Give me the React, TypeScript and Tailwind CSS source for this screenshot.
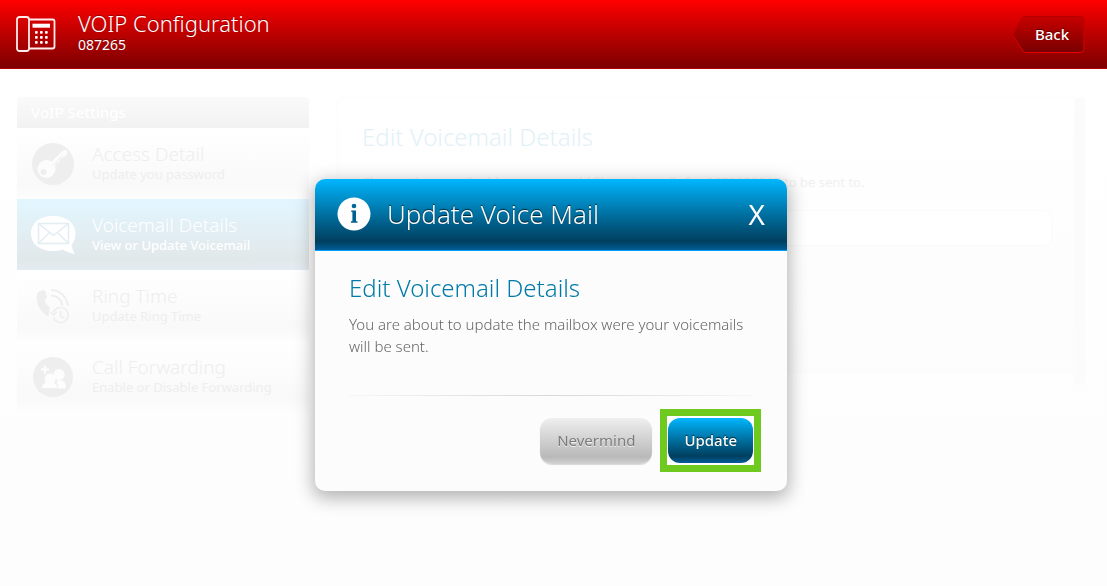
import { useState } from 'react';

type IconProps = { className?: string };

function PhoneIcon({ className }: IconProps) {
  return (
    <svg viewBox="0 0 40 36" className={className} fill="none" stroke="#ffecec" strokeWidth="1.8" aria-hidden="true">
      <rect x="1" y="1" width="12" height="34" rx="2.5" />
      <path d="M13 3.5h23.5a2 2 0 0 1 2 2v25a2 2 0 0 1-2 2H13" />
      <rect x="16.5" y="7.7" width="17.5" height="4" fill="#fff" stroke="none" />
      <g fill="#fff" stroke="none">
        {[15, 20, 25].map((y) =>
          [19, 24, 29].map((x) => <rect key={`${x}-${y}`} x={x} y={y} width="2.7" height="2.7" rx="0.8" />)
        )}
      </g>
    </svg>
  );
}

function KeyIcon({ className }: IconProps) {
  return (
    <svg viewBox="0 0 42 42" className={className} aria-hidden="true">
      <circle cx="21" cy="21" r="21" fill="#eeeeee" />
      <circle cx="14.5" cy="26" r="9" fill="#fcfcfc" />
      <circle cx="11.5" cy="29" r="3" fill="#eeeeee" />
      <path d="M18 20 31 7.500q4-2 4.500 1.500 0 2-2 4L30 15l-2 1-1 3-3 1-1 3-2 2z" fill="#fcfcfc" />
      <path d="M20.500 22.500 31 12" stroke="#eeeeee" strokeWidth="1" />
    </svg>
  );
}

function MailIcon({ className }: IconProps) {
  return (
    <svg viewBox="0 0 46 40" className={className} aria-hidden="true">
      <path
        d="M23 1C10 1 1 8 1 18.500S10 36 23 36c4 0 7-.6 10-1.500 3 2 7 3.500 12 4.500-2-3-3-6-3.500-9 2.500-3 4-7 4-11.500C45.500 8 36 1 23 1z"
        fill="#fff"
      />
      <g fill="none" stroke="#e3eef3" strokeWidth="1.600">
        <rect x="8.500" y="8.500" width="30" height="20" />
        <path d="m8.500 8.500 15 12 15-12M8.500 28.500l11-11M38.500 28.500l-11-11" />
      </g>
    </svg>
  );
}

function RingIcon({ className }: IconProps) {
  return (
    <svg viewBox="0 0 36 36" className={className} fill="none" aria-hidden="true">
      <path
        d="M3.500 4 8 2q2 0 2.500 2l1.500 5q0 1.500-2.500 3c1 3 2.500 5 5 7.500l-1 9C6 25 0 15 2 7q.5-2 1.500-3z"
        fill="#eeeeee"
      />
      <path d="M16 2c9 0 16 7 17 16M16 7.500c6 0 10 4 11.500 10" stroke="#eeeeee" strokeWidth="2" />
      <path d="M18.500 24.500a7.500 7.500 0 1 1 0 5M16 24l2.500 3 3-3M25.500 23v5l4 2.500" stroke="#eeeeee" strokeWidth="1.600" />
    </svg>
  );
}

function PeopleIcon({ className }: IconProps) {
  return (
    <svg viewBox="0 0 40 40" className={className} aria-hidden="true">
      <circle cx="20" cy="20" r="20" fill="#eeeeee" />
      <path d="M12 8.500v8M8 12.500h8" stroke="#fdfdfd" strokeWidth="2.200" />
      <circle cx="26" cy="17.500" r="5.500" fill="#fdfdfd" />
      <path d="M24 31.500v-8q8-1 8.500 4v4z" fill="#fdfdfd" />
      <g fill="#fdfdfd" stroke="#eeeeee" strokeWidth="1">
        <path d="M8.500 31.500c0-4 2-5.500 5-6h7c2.500.5 4.500 2 4.500 6z" />
        <circle cx="17" cy="22" r="5.500" stroke="none" />
      </g>
    </svg>
  );
}

function InfoIcon({ className }: IconProps) {
  return (
    <svg viewBox="0 0 34 34" className={className} aria-hidden="true">
      <circle cx="17" cy="17" r="16.500" fill="#fff" />
      <circle cx="17" cy="9" r="2.300" fill="#00699b" />
      <path d="M14.300 13.500h4.700v10.800h1.500v1.500h-6.600v-1.500h1.500v-9.300h-1.100z" fill="#00608f" />
    </svg>
  );
}

const menuItems = [
  { title: 'Access Detail', subtitle: 'Update you password', Icon: KeyIcon, iconClass: 'size-[42px]' },
  { title: 'Voicemail Details', subtitle: 'View or Update Voicemail', Icon: MailIcon, iconClass: 'h-10 w-[46px]' },
  { title: 'Ring Time', subtitle: 'Update Ring Time', Icon: RingIcon, iconClass: 'size-9' },
  { title: 'Call Forwarding', subtitle: 'Enable or Disable Forwarding', Icon: PeopleIcon, iconClass: 'size-10' },
];

function Header() {
  return (
    <header className="flex items-center border-b border-[#b80000] bg-linear-to-b from-[#ff0000] to-[#7d0000] pr-[22px] pl-4 text-white">
      <PhoneIcon className="h-9 w-10 shrink-0" />
      <div className="flex-1 pt-2 pb-4 pl-[22px] [text-shadow:0_-1px_0_rgba(0,0,0,0.35)]">
        <h1 className="text-[22px] leading-[30px] font-light">VOIP Configuration</h1>
        <p className="text-sm leading-[14px]">087265</p>
      </div>
      <button type="button" className="relative h-[37px] w-[70px] pl-1 text-[15px] font-medium">
        <svg viewBox="0 0 74 37" className="absolute inset-y-0 right-0 h-[37px] w-[74px]" aria-hidden="true">
          <defs>
            <linearGradient id="back" x1="0" y1="0" x2="0" y2="1">
              <stop offset="0" stopColor="#c80000" />
              <stop offset="1" stopColor="#780000" />
            </linearGradient>
            <linearGradient id="backEdge" x1="0" y1="0" x2="0" y2="1">
              <stop offset="0" stopColor="#b40000" />
              <stop offset="1" stopColor="#e60000" />
            </linearGradient>
          </defs>
          <path
            d="M13 .5h56a4 4 0 0 1 4 4v28a4 4 0 0 1-4 4H15q-2 0-3-1.500L1.500 18.500 11 2q.8-1.500 2-1.500z"
            fill="url(#back)"
            stroke="url(#backEdge)"
          />
        </svg>
        <span className="relative [text-shadow:0_-1px_0_rgba(0,0,0,0.5)]">Back</span>
      </button>
    </header>
  );
}

function Sidebar() {
  return (
    <nav className="w-[292px] shrink-0">
      <h2 className="rounded-t bg-linear-to-b from-[#fafafa] to-[#f2f2f2] pl-3.5 text-[15px] leading-[31px] font-medium text-white">
        VoIP Settings
      </h2>
      {menuItems.map(({ title, subtitle, Icon, iconClass }) => {
        const active = title === 'Voicemail Details';
        return (
          <a
            key={title}
            href="#"
            className={
              active
                ? 'flex h-[71px] items-center bg-linear-to-b from-[#e2f6ff] via-[#e2e8ea] via-85% to-[#e3ecf4] text-white'
                : 'flex h-[71px] items-center bg-linear-to-b from-white via-[#f9f9f9] via-80% to-[#fdfdfd] text-[#eeeeee]'
            }
          >
            <span className="mr-1 flex w-[71px] shrink-0 justify-center">
              <Icon className={iconClass} />
            </span>
            <span className="flex flex-col pb-1">
              <span className="text-[19px] leading-6 font-light">{title}</span>
              <span className={active ? 'text-[13px] leading-4 font-medium' : 'text-[13px] leading-4'}>{subtitle}</span>
            </span>
          </a>
        );
      })}
    </nav>
  );
}

function DetailsPanel() {
  return (
    <section className="ml-7 h-[277px] flex-1 rounded-l-lg border border-[#fcfcfc] bg-linear-to-b from-white to-[#fcfcfc] pt-5 pr-[22px] pl-6">
      <h2 className="text-2xl leading-[38px] font-light text-[#e3f1f7]">Edit Voicemail Details</h2>
      <label htmlFor="mailbox" className="block pt-2.5 text-[13px] leading-8 text-[#f0f0f0]">
        Choose the e-mail address you would like voicemails for <b>0870050815</b> to be sent to.
      </label>
      <input
        id="mailbox"
        type="email"
        className="mt-3 h-9 w-full rounded-lg border border-[#fafafa] bg-white px-3 text-[#eeeeee]"
      />
    </section>
  );
}

function UpdateDialog({ onClose }: { onClose: () => void }) {
  return (
    <div
      role="dialog"
      aria-modal="true"
      aria-labelledby="dialog-title"
      className="w-[472px] rounded-[10px] bg-[#fcfcfc] shadow-[0_5px_18px_2px_rgba(0,0,0,0.3)]"
    >
      <div className="flex h-[72px] items-center rounded-t-[10px] border-b border-[#00a2ff] bg-linear-to-b from-[#00b7ff] via-[#003f5f] via-88% to-[#005c99] px-[22px] pb-0.5 text-white [text-shadow:0_-1px_1px_rgba(0,0,0,0.7)]">
        <InfoIcon className="size-[34px]" />
        <h2 id="dialog-title" className="flex-1 pl-4 text-[26px] leading-8 font-light">
          Update Voice Mail
        </h2>
        <button type="button" aria-label="Close" onClick={onClose} className="text-[28px] leading-8">
          X
        </button>
      </div>
      <div className="px-[34px] pt-5 pb-[19px]">
        <h3 className="text-2xl leading-[34px] font-light text-[#007aa8]">Edit Voicemail Details</h3>
        <p className="pt-2 text-[15px] leading-[22px] font-light text-[#666666]">
          You are about to update the mailbox were your voicemails will be sent.
        </p>
        <div className="mt-[38px] h-px bg-linear-to-r from-[#f6f6f6] via-[#d8d8d8] to-[#f6f6f6]" />
        <div className="-mr-2 flex items-center justify-end gap-2 pt-[13px]">
          <button
            type="button"
            onClick={onClose}
            className="h-[46px] rounded-xl bg-linear-to-b from-[#efefef] via-[#b9b9b9] via-85% to-[#d2d2d2] px-[17px] text-[15px] text-[#7b7b7b] shadow-[0_1px_1px_rgba(0,0,0,0.15)] [text-shadow:0_1px_0_rgba(255,255,255,0.7)]"
          >
            Nevermind
          </button>
          <div className="border-[7px] border-[#6fca1f] bg-white px-px py-0.5">
            <button
              type="button"
              onClick={onClose}
              className="block h-[45px] rounded-xl bg-linear-to-b from-[#00b7ff] via-[#003f5f] via-85% to-[#005c99] px-4 text-[15px] font-medium text-white [text-shadow:0_-1px_1px_rgba(0,0,0,0.7)]"
            >
              Update
            </button>
          </div>
        </div>
      </div>
    </div>
  );
}

export default function App() {
  const [open, setOpen] = useState(true);

  return (
    <div className="min-h-screen bg-linear-to-b from-white to-[#fdfdfd] font-['Noto_Sans',sans-serif]">
      <Header />
      <main className="flex items-start pt-7 pr-[22px] pl-[17px]">
        <Sidebar />
        <DetailsPanel />
        <div className="h-[288px] w-2.5 shrink-0 rounded bg-[#fbfbfb]" />
      </main>
      {open && (
        <div className="fixed inset-0 flex items-start justify-center pt-[179px] pr-[5px]">
          <UpdateDialog onClose={() => setOpen(false)} />
        </div>
      )}
    </div>
  );
}
